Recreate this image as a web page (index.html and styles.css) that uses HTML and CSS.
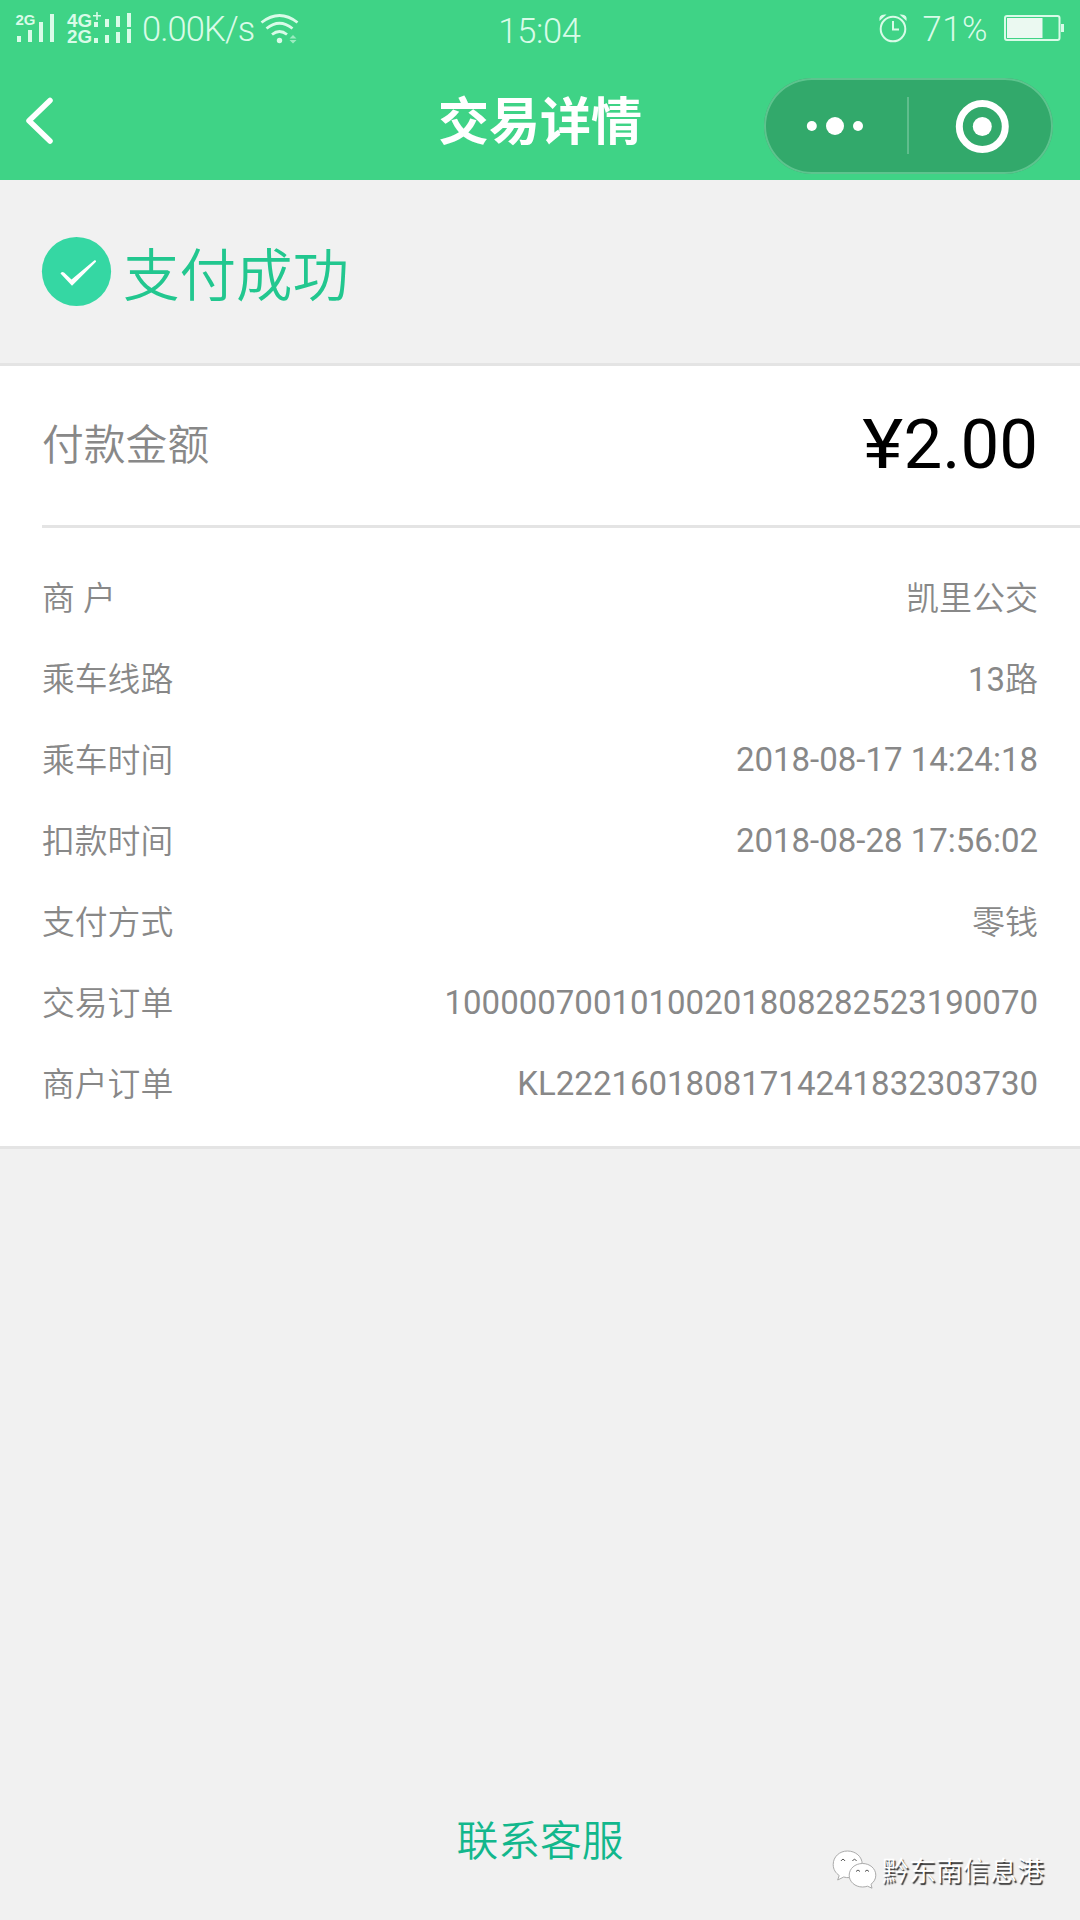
FILE: index.html
```html
<!DOCTYPE html>
<html lang="zh-CN">
<head>
<meta charset="utf-8">
<title>交易详情</title>
<link rel="stylesheet" href="styles.css">
</head>
<body>
<div class="screen">
  <header class="top">
    <div class="status">
      <div class="status-left">
        <svg class="signals" width="120" height="34" viewBox="14 10 120 34">
          <g class="signal-text">
            <text x="15.5" y="24" font-size="14.500" textLength="20" lengthAdjust="spacingAndGlyphs">2G</text>
            <text x="67" y="25.500" font-size="18" textLength="25" lengthAdjust="spacingAndGlyphs">4G</text>
            <text x="67" y="41.500" font-size="18" textLength="25" lengthAdjust="spacingAndGlyphs">2G</text>
          </g>
          <path d="M17 35h4v6h-4zM28 29h4v12h-4zM39 21h4v20h-4zM50 13h4v28h-4zM94 21h4v5h-4zM105 18h4v8h-4zM116 15h4v11h-4zM127 12h4v14h-4zM94 37h4v5h-4zM105 34h4v8h-4zM116 31h4v11h-4zM127 28h4v14h-4zM93 14h8v1.600h-8zM96.200 11h1.600v8h-1.600z"/>
        </svg>
        <span class="speed">0.00K/s</span>
        <svg class="wifi" width="38" height="32" viewBox="260 10 38 32">
          <g class="line"><path d="M261.500 20.500Q279.500 6.500 297.500 20.500"/><path d="M266.500 26.500Q279.500 16 292.500 26.500"/><path d="M272 32.500Q279.500 26.500 287 32.500"/></g>
          <circle cx="279.500" cy="38.500" r="2.700"/>
          <path class="dim" d="M289.500 36.500l3.500-3.500 3.500 3.500zM289.500 38l3.500 3.500 3.500-3.500z"/>
        </svg>
      </div>
      <span class="clock">15:04</span>
      <div class="status-right">
        <svg class="alarm" width="28" height="30" viewBox="879 12 28 30">
          <g class="line"><circle cx="893" cy="28" r="12.300"/><path d="M893 20v8.500h6"/></g>
          <path d="M879.500 20Q878 12.500 886.500 13.500zM906.500 20Q908 12.500 899.500 13.500z"/>
        </svg>
        <span class="percent">71%</span>
        <svg class="battery" width="60" height="28" viewBox="1004 13 60 28">
          <rect class="line" x="1005" y="15" width="54.500" height="24" rx="2"/>
          <path class="charge" d="M1007 17h35.500v20h-35.500z"/><path d="M1061 23h3v8h-3z"/>
        </svg>
      </div>
    </div>
    <div class="nav">
      <svg class="back" width="28" height="48" viewBox="26 97 28 48"><path d="M51 100.500L30 120.800L51 141"/></svg>
      <h1 class="title">交易详情</h1>
      <div class="capsule">
        <svg width="289" height="96" viewBox="764 78 289 96">
          <circle cx="811.800" cy="126" r="5"/><circle cx="835" cy="126" r="9"/><circle cx="858" cy="126" r="5"/>
          <path class="divider" d="M908 97v57"/>
          <circle class="ring" cx="982.300" cy="126.500" r="23"/><circle cx="982.300" cy="126.500" r="9.500"/>
        </svg>
      </div>
    </div>
  </header>
  <section class="result">
    <svg class="check" width="70" height="70" viewBox="42 237 70 70"><circle cx="76.500" cy="271.500" r="34.600"/><path d="M60.500 273.500Q61.500 271 64 272.500L71.500 279.500L94.500 260.200Q96.500 259.800 96 261.800L72 285.800Z"/></svg>
    <span class="result-text">支付成功</span>
  </section>
  <main class="card">
    <div class="amount"><span class="amount-label">付款金额</span><span class="amount-value"><span class="currency">¥</span>2.00</span></div>
    <dl class="details">
      <div class="row"><dt>商 户</dt><dd class="name">凯里公交</dd></div>
      <div class="row"><dt>乘车线路</dt><dd>13<span class="name">路</span></dd></div>
      <div class="row"><dt>乘车时间</dt><dd>2018-08-17 14:24:18</dd></div>
      <div class="row"><dt>扣款时间</dt><dd>2018-08-28 17:56:02</dd></div>
      <div class="row"><dt>支付方式</dt><dd class="name">零钱</dd></div>
      <div class="row"><dt>交易订单</dt><dd>10000070010100201808282523190070</dd></div>
      <div class="row"><dt>商户订单</dt><dd>KL22216018081714241832303730</dd></div>
    </dl>
  </main>
  <a class="service">联系客服</a>
  <div class="watermark">
    <svg width="46" height="42" viewBox="831 1848 46 42">
      <path d="M847.500 1851c-8 0-14.300 5.800-14.300 13.500 0 5 2.500 8.500 6 11l-1.500 4.500 6-3c2 .6 4 .8 6 .6 9-.5 12.500-7 12.500-13.500 0-7.500-6.700-13.100-14.700-13.100z"/>
      <path d="M862.500 1863.500c-7.500 0-13.300 5.200-13.300 11.700s5.800 11.800 13.300 11.800c1.800 0 3.500-.3 5-.8l4.500 2-1-4c3-2.200 4.800-5.300 4.800-9 0-6.500-5.800-11.700-13.300-11.700z"/>
      <path class="eyes" d="M841 1861q2-3.500 4 0M852.500 1861q2-3.500 4 0M856 1871.500q2-3 4 0M865 1871.500q2-3 4 0"/>
    </svg>
    <span>黔东南信息港</span>
  </div>
</div>
</body>
</html>
```
FILE: styles.css
```css
* { box-sizing: border-box; }
body { margin: 0; background: #f1f1f1; font-family: Roboto, "Noto Sans CJK SC", sans-serif; }
svg { display: block; flex: none; overflow: visible; }
.screen { position: relative; width: 1080px; height: 1920px; display: flex; flex-direction: column; overflow: hidden; }
.top { height: 180px; background: #3fd386; color: #fff; }
.status { height: 56px; display: grid; grid-template-columns: 1fr auto 1fr; align-items: center; padding: 0 16px 0 14px; font-size: 34.5px; font-weight: 300; color: #d9fbe8; fill: #d9fbe8; line-height: 54px; }
.status .line { fill: none; stroke: #d9fbe8; stroke-width: 2; }
.status .wifi .line { stroke-width: 2.8; }
.status .dim { opacity: .6; }
.status .charge { fill: #ebf9f1; }
.status-left, .status-right { display: flex; align-items: center; }
.status-left { padding-bottom: 2px; }
.status-right { justify-content: flex-end; padding-bottom: 2px; }
.signal-text { font-family: "Liberation Sans", sans-serif; font-weight: 700; }
.speed { margin-left: 8px; padding-top: 2px; width: 118px; letter-spacing: -.9px; }
.clock { padding: 3px 0 0 1px; letter-spacing: -.3px; }
.percent { margin: 0 16px 0 15px; padding-top: 1px; letter-spacing: .6px; }
.nav { height: 124px; position: relative; display: flex; align-items: flex-start; justify-content: space-between; padding: 22px 27px 0 25px; }
.back { margin-top: 19px; fill: none; stroke: #fff; stroke-width: 5.500; stroke-linecap: round; stroke-linejoin: round; }
.title { position: absolute; inset: 0; margin: 0; text-align: center; font-size: 51px; line-height: 133px; font-weight: 700; }
.capsule { position: relative; width: 289px; height: 96px; border-radius: 48px; background: #32a96b; box-shadow: inset 0 0 0 2px #5dc48e; fill: #fff; }
.divider { stroke: #70c598; stroke-width: 1.5; }
.ring { fill: none; stroke: #fff; stroke-width: 7; }
.result { height: 183px; display: flex; align-items: center; padding-left: 42px; gap: 11px; color: #22c78f; }
.check { fill: #35d7a3; }
.check path { fill: #fff; }
.result-text { padding-bottom: 2px; font-family: "Noto Sans CJK SC", sans-serif; font-size: 56.5px; font-weight: 350; line-height: 80px; }
.card { height: 786px; background: #fff; border-top: 3px solid #e4e4e4; border-bottom: 3px solid #e4e4e4; color: #888; }
.amount { height: 162px; margin-left: 42px; padding-right: 42px; display: flex; align-items: center; justify-content: space-between; border-bottom: 3px solid #e4e4e4; }
.amount-label { padding-bottom: 7px; font-family: "Noto Sans CJK SC", sans-serif; font-size: 41.8px; font-weight: 350; line-height: 60px; }
.amount-value { padding-bottom: 3px; font-size: 69px; color: #000; }
.currency { display: inline-block; transform: scaleX(1.13); transform-origin: right; }
.details { margin: 0; padding: 29px 42px 0; font-size: 33px; }
.row { height: 81px; display: flex; align-items: center; justify-content: space-between; line-height: 48px; }
.row dt { padding-bottom: 4px; font-family: "Noto Sans CJK SC", sans-serif; font-size: 32.8px; font-weight: 350; word-spacing: 1px; }
.row dd { margin: 0; }
.row .name { padding-bottom: 4px; font-family: "Noto Sans CJK SC", sans-serif; font-weight: 350; }
.service { margin: auto auto 51px; font-family: "Noto Sans CJK SC", sans-serif; font-size: 41.8px; font-weight: 350; line-height: 62px; color: #12b78c; }
.watermark { position: absolute; right: 36px; bottom: 30px; display: flex; align-items: center; gap: 5px; font-size: 27px; font-weight: 350; color: #fff; text-shadow: 1.500px 1.500px 1px #333; }
.watermark svg { fill: #fff; stroke: #aaa; stroke-width: 1; }
.watermark .eyes { fill: none; stroke: #555; }
```
